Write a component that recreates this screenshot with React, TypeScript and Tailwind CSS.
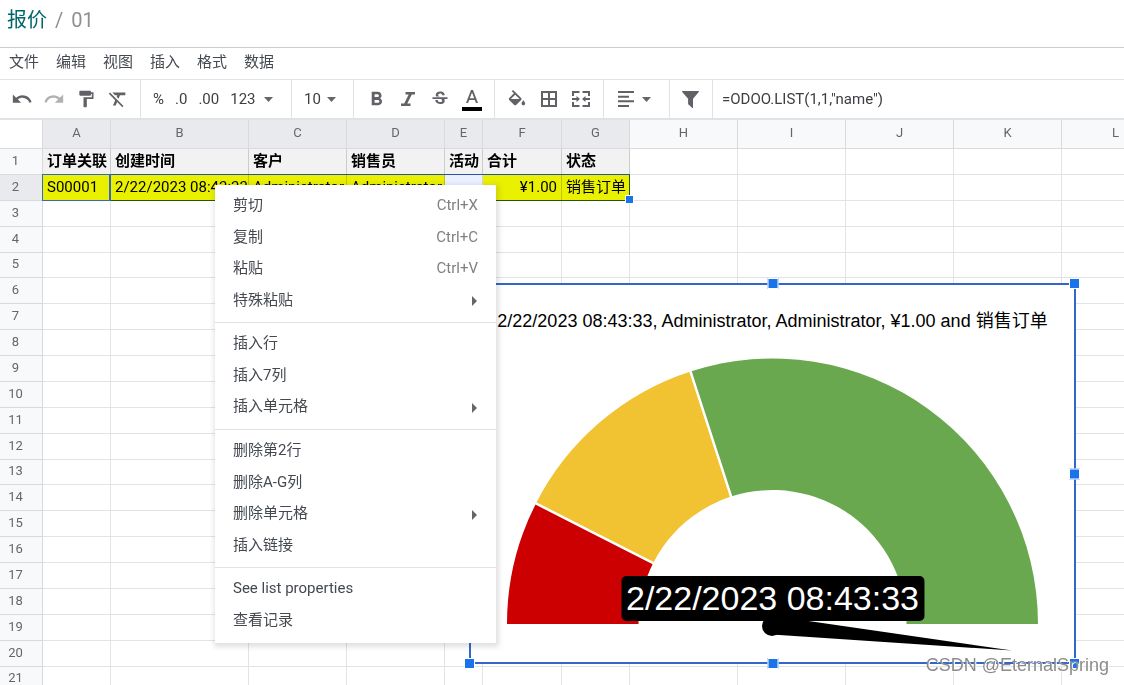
import React from "react";
import {
  MdUndo,
  MdRedo,
  MdFormatPaint,
  MdFormatClear,
  MdFormatBold,
  MdStrikethroughS,
} from "react-icons/md";

const menus = ["文件", "编辑", "视图", "插入", "格式", "数据"];

const columns = [
  { name: "A", width: "w-[68px]", selected: true },
  { name: "B", width: "w-[138px]", selected: true },
  { name: "C", width: "w-[98px]", selected: true },
  { name: "D", width: "w-[98px]", selected: true },
  { name: "E", width: "w-[38px]", selected: true },
  { name: "F", width: "w-[79px]", selected: true },
  { name: "G", width: "w-[68px]", selected: true },
  { name: "H", width: "w-[108px]", selected: false },
  { name: "I", width: "w-[108px]", selected: false },
  { name: "J", width: "w-[108px]", selected: false },
  { name: "K", width: "w-[108px]", selected: false },
  { name: "L", width: "w-[108px]", selected: false },
];

const titles = ["订单关联", "创建时间", "客户", "销售员", "活动", "合计", "状态"];
const record = [
  "S00001",
  "2/22/2023 08:43:33",
  "Administrator",
  "Administrator",
  "",
  "¥1.00",
  "销售订单",
];

type Item = { label: string; hint?: string; sub?: boolean };
const sections: Item[][] = [
  [
    { label: "剪切", hint: "Ctrl+X" },
    { label: "复制", hint: "Ctrl+C" },
    { label: "粘贴", hint: "Ctrl+V" },
    { label: "特殊粘贴", sub: true },
  ],
  [{ label: "插入行" }, { label: "插入7列" }, { label: "插入单元格", sub: true }],
  [
    { label: "删除第2行" },
    { label: "删除A-G列" },
    { label: "删除单元格", sub: true },
    { label: "插入链接" },
  ],
  [{ label: "See list properties" }, { label: "查看记录" }],
];

function Caret() {
  return (
    <svg className="h-[5px] w-[9px] shrink-0 fill-[#666]" viewBox="0 0 9 5" aria-hidden="true">
      <path d="M0 0h9L4.500 5z" />
    </svg>
  );
}

function Tool({ label, children }: { label: string; children: React.ReactNode }) {
  return (
    <button
      type="button"
      aria-label={label}
      className="flex h-5 w-5 shrink-0 items-center justify-center text-[#606266]"
    >
      {children}
    </button>
  );
}

function Group({ className, children }: { className: string; children: React.ReactNode }) {
  return (
    <div className={"flex h-full shrink-0 items-center border-r border-[#e0e2e4] " + className}>
      {children}
    </div>
  );
}

function Toolbar() {
  return (
    <div className="flex h-10 items-center border-b-2 border-[#e0e2e4] text-[15px] leading-5 text-[#3c4043]">
      <Group className="w-[141px] gap-3 pl-3">
        <Tool label="撤销">
          <MdUndo size={22} className="shrink-0" />
        </Tool>
        <button
          type="button"
          aria-label="重做"
          disabled
          className="flex h-5 w-5 items-center justify-center text-[#b0b1b3]"
        >
          <MdRedo size={22} className="shrink-0" />
        </button>
        <Tool label="格式刷">
          <MdFormatPaint size={20} />
        </Tool>
        <Tool label="清除格式">
          <MdFormatClear size={22} className="shrink-0" />
        </Tool>
      </Group>
      <Group className="w-[151px] gap-[11px] pl-3">
        <button type="button">%</button>
        <button type="button">.0</button>
        <button type="button">.00</button>
        <button type="button" className="flex items-center gap-2">
          123
          <Caret />
        </button>
      </Group>
      <Group className="w-[62px] pl-3">
        <button type="button" className="flex items-center gap-1.5">
          10
          <Caret />
        </button>
      </Group>
      <Group className="w-[141px] gap-3 pl-3">
        <Tool label="粗体">
          <MdFormatBold size={23} className="shrink-0" />
        </Tool>
        <Tool label="斜体">
          <svg className="h-3.5 w-3.5 fill-current" viewBox="0 0 14 14">
            <path d="M4.500 0H14v2.400h-3.200L6.300 11.600h3.200V14H0v-2.400h3.200L7.700 2.400H4.500z" />
          </svg>
        </Tool>
        <Tool label="删除线">
          <MdStrikethroughS size={20} />
        </Tool>
        <Tool label="文字颜色">
          <svg className="h-6 w-5 shrink-0 fill-current" viewBox="0 0 20 24">
            <path d="M9 3L4 16h2.100l1.050-2.900h5.700L13.900 16H16L11 3zM7.800 11.300L10 5.400l2.200 5.900z" />
            <path d="M0 20h20v4H0z" fill="#000" />
          </svg>
        </Tool>
      </Group>
      <Group className="w-[109px] gap-3 pl-3">
        <Tool label="填充颜色">
          <svg className="h-5 w-5 fill-current" viewBox="1 -1 22 22">
            <path d="M16.560 8.940L7.620 0 6.210 1.410l2.380 2.380-5.150 5.150c-.59.59-.59 1.540 0 2.120l5.500 5.500c.29.29.68.44 1.060.44s.77-.15 1.060-.44l5.500-5.500c.59-.58.59-1.530 0-2.120zM5.210 10L10 5.210 14.790 10zM19 11.500s-2 2.170-2 3.500c0 1.100.9 2 2 2s2-.9 2-2c0-1.330-2-3.500-2-3.500z" />
          </svg>
        </Tool>
        <Tool label="边框">
          <svg className="h-4 w-4 fill-none stroke-current stroke-2" viewBox="0 0 16 16">
            <path d="M1 1h14v14H1zM8 1v14M1 8h14" />
          </svg>
        </Tool>
        <Tool label="合并单元格">
          <svg className="h-4 w-[18px] fill-none stroke-current stroke-2" viewBox="0 0 18 16">
            <path d="M1 5V1h6.500M10.500 1H17v4M1 11v4h6.500M10.500 15H17v-4M0 8h5M18 8h-5" />
            <path d="M4.500 5L8 8l-3.500 3zM13.500 5L10 8l3.500 3z" className="fill-current stroke-none" />
          </svg>
        </Tool>
      </Group>
      <Group className="w-[66px] pl-3">
        <button type="button" aria-label="对齐" className="flex items-center gap-2 pl-0.5 text-[#606266]">
          <svg className="h-4 w-4 fill-current" viewBox="0 0 16 16">
            <path d="M0 0h16v2H0zM0 4.700h11v2H0zM0 9.300h16v2H0zM0 14h11v2H0z" />
          </svg>
          <Caret />
        </button>
      </Group>
      <Group className="w-[43px] pl-2.5">
        <Tool label="筛选">
          <svg className="h-[17px] w-[17px] fill-current" viewBox="0 0 17 17">
            <path d="M.6 0h15.800c.5 0 .8.700.4 1.100L11 7.800V16.400c0 .5-.5.800-.9.400L6.500 13.600c-.3-.2-.4-.5-.4-.8V7.800L.2 1.100C-.2.700.1 0 .6 0z" />
          </svg>
        </Tool>
      </Group>
      <input
        type="text"
        aria-label="公式"
        defaultValue={'=ODOO.LIST(1,1,"name")'}
        className="h-full min-w-0 flex-1 bg-transparent pl-[9px] text-[15px] outline-none"
      />
    </div>
  );
}

function cellClass(row: number, col: number) {
  if (row === 1 && col < 7) return "border-[#cbcccd] bg-[#f2f2f2] font-bold";
  if (row === 2 && col < 7 && col !== 4)
    return "border-[#d0d400] bg-[#ffff00]" + (col === 5 ? " text-right" : "");
  return "border-[#e2e3e3]";
}

function Sheet() {
  return (
    <table className="w-[1170px] table-fixed border-separate border-spacing-0 text-[15px] leading-5 text-black">
      <colgroup>
        <col className="w-[43px]" />
        {columns.map((c) => (
          <col key={c.name} className={c.width} />
        ))}
      </colgroup>
      <thead>
        <tr className="h-[29px] text-[13px] text-[#666]">
          <td className="border-r border-b border-[#d9dadc] p-0" />
          {columns.map((c) => (
            <th
              key={c.name}
              scope="col"
              className={
                "border-r border-b border-[#d9dadc] p-0 pb-0.5 text-center font-normal " +
                (c.selected ? "bg-[#e8eaed]" : "bg-[#f8f9fa]")
              }
            >
              {c.name}
            </th>
          ))}
        </tr>
      </thead>
      <tbody>
        {Array.from({ length: 21 }, (_, i) => i + 1).map((row) => (
          <tr key={row} className={row % 8 === 5 ? "h-[25px]" : "h-[26px]"}>
            <th
              scope="row"
              className={
                "border-r border-b border-[#d9dadc] p-0 pr-[11px] pb-0.5 text-center text-[13px] font-normal text-[#666] " +
                (row === 2 ? "bg-[#e8eaed]" : "bg-[#f8f9fa]")
              }
            >
              {row}
            </th>
            {columns.map((c, col) => (
              <td
                key={c.name}
                className={
                  "overflow-hidden border-r border-b p-0 px-1 pb-0.5 whitespace-nowrap " +
                  cellClass(row, col)
                }
              >
                {row === 1 ? titles[col] : row === 2 ? record[col] : null}
              </td>
            ))}
          </tr>
        ))}
      </tbody>
    </table>
  );
}

const CX = 301.5;
const CY = 283;

function arc(from: number, to: number) {
  const pt = (r: number, f: number) =>
    `${CX - r * Math.cos(Math.PI * f)} ${CY - r * Math.sin(Math.PI * f)}`;
  return `M${pt(265.5, from)}A265.5 265.5 0 0 1 ${pt(265.5, to)}L${pt(134, to)}A134 134 0 0 0 ${pt(134, from)}Z`;
}

function cut(f: number) {
  const c = Math.cos(Math.PI * f);
  const s = Math.sin(Math.PI * f);
  return `M${CX - 130 * c} ${CY - 130 * s}L${CX - 270 * c} ${CY - 270 * s}`;
}

const handles = [
  "-top-[7px] left-1/2 -translate-x-1/2",
  "-top-[7px] -right-[6px]",
  "top-1/2 -right-[6px] -translate-y-1/2",
  "-right-[6px] -bottom-[7px]",
  "-bottom-[7px] left-1/2 -translate-x-1/2",
  "-bottom-[7px] -left-[7px]",
];

function GaugeFigure() {
  return (
    <figure className="absolute top-[163px] left-[469px] w-[607px] border-2 border-[#3266ca] bg-white">
      <figcaption className="pt-4 text-center font-['Liberation_Sans','Noto_Sans_CJK_SC',sans-serif] text-lg leading-10 whitespace-nowrap text-black">
        2/22/2023 08:43:33, Administrator, Administrator, ¥1.00 and 销售订单
      </figcaption>
      <div className="relative">
        <svg className="block w-full" viewBox="0 0 603 321" aria-hidden="true">
          <path d={arc(0, 0.15)} fill="#cc0000" />
          <path d={arc(0.15, 0.4)} fill="#f1c232" />
          <path d={arc(0.4, 1)} fill="#6aa84f" />
          <path d={cut(0.15) + cut(0.4)} stroke="#fff" strokeWidth="2.500" />
          <circle cx="301" cy="285" r="10" />
          <path d="M303 275L541 309.500L301 293.500z" />
        </svg>
        <div className="absolute top-[235px] left-1/2 -translate-x-1/2 rounded-[5px] bg-black px-[5px] text-center font-['Liberation_Sans',sans-serif] text-[34px] leading-[45px] whitespace-nowrap text-white">
          2/22/2023 08:43:33
        </div>
      </div>
      {handles.map((h) => (
        <span key={h} className={"absolute h-[11px] w-[11px] border border-white bg-[#1a73e8] " + h} />
      ))}
    </figure>
  );
}

function ContextMenu() {
  return (
    <div
      role="menu"
      className="absolute top-[65px] left-[215px] w-[281px] bg-white pt-[5px] pb-[7px] text-[15px] text-[#444950] shadow-[1px_2px_5px_2px_rgba(51,51,51,0.15)]"
    >
      {sections.map((items, s) => (
        <div key={s} className={s > 0 ? "mt-1.5 border-t border-[#e0e2e4] pt-[5px]" : ""}>
          {items.map((it) => (
            <button
              key={it.label}
              type="button"
              role="menuitem"
              className="flex w-full items-center justify-between pr-[18px] pb-px pl-[18px] odd:h-8 even:h-[31px]"
            >
              <span>{it.label}</span>
              {it.hint && <span className="text-[#808080]">{it.hint}</span>}
              {it.sub && (
                <svg className="mt-0.5 h-2.5 w-[6px] fill-[#666]" viewBox="0 0 6 10" aria-hidden="true">
                  <path d="M0 0l5 5-5 5z" />
                </svg>
              )}
            </button>
          ))}
        </div>
      ))}
    </div>
  );
}

export default function App() {
  return (
    <div className="flex h-screen flex-col overflow-hidden bg-white font-[Roboto,'Noto_Sans_CJK_SC',sans-serif]">
      <header className="flex h-12 shrink-0 items-center gap-2 border-b border-[#c9ccd2] pb-2 pl-[7px] text-xl">
        <a href="#quotes" className="text-[#01666b]">
          报价
        </a>
        <span className="text-[#8f8f8f]">/</span>
        <span className="text-[#8f8f8f]">01</span>
      </header>
      <nav className="flex h-8 shrink-0 items-center gap-[17px] border-b border-[#e0e2e4] pb-0.5 pl-[9px] text-[15px] text-[#444950]">
        {menus.map((m) => (
          <button key={m} type="button">
            {m}
          </button>
        ))}
      </nav>
      <Toolbar />
      <main className="relative min-h-0 flex-1 overflow-hidden">
        <Sheet />
        <div className="absolute top-[54px] left-[42px] h-[27px] w-[588px] border border-[#3266ca] bg-[#e9f0ff] mix-blend-multiply" />
        <div className="absolute top-[54px] left-[42px] h-[27px] w-[69px] border border-r-2 border-[#3266ca]" />
        <div className="absolute top-[75px] left-[625px] h-[9px] w-[9px] border border-white bg-[#1a73e8]" />
        <GaugeFigure />
        <ContextMenu />
        <div className="absolute right-[15px] bottom-1.5 font-['Liberation_Sans',sans-serif] text-lg leading-7 text-[#8c8c8c] [text-shadow:1px_1px_0_#ffffff]">
          CSDN @EternalSpring
        </div>
      </main>
    </div>
  );
}
